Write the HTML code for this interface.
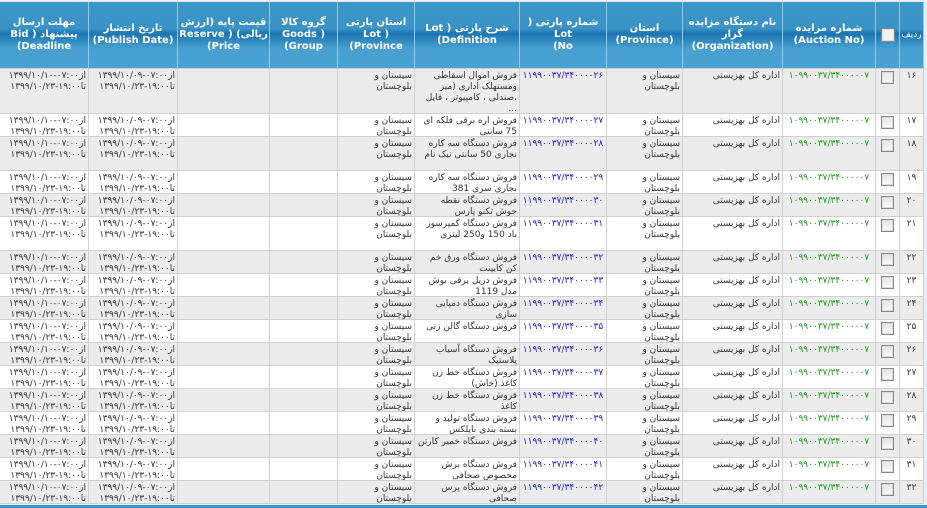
<!DOCTYPE html>
<html><head><meta charset="utf-8">
<style>
html,body{margin:0;padding:0;background:#fff;width:927px;height:508px;overflow:hidden;}
body{font-family:"DejaVu Sans","Liberation Sans",sans-serif;}
.wrap{position:absolute;left:0;top:0;width:927px;height:508px;background:#e8eef2;overflow:hidden;}
table{position:absolute;right:3px;top:2px;width:924px;border-collapse:collapse;table-layout:fixed;direction:rtl;font-size:9px;color:#333;}
th{height:66px;color:#fff;font-weight:bold;font-size:10px;line-height:12px;border-left:1px solid #8fcdf0;border-right:1px solid #8fcdf0;padding:0;
background:linear-gradient(to bottom,#3d96c8 0%,#3a93c6 40%,#1c76b2 48%,#2c86bd 56%,#469fd0 70%,#4aa2d2 100%);text-align:center;vertical-align:middle;overflow:hidden;}
th div{height:64px;display:flex;align-items:center;justify-content:center;overflow:hidden;}
td{border:1px solid #d0d0d0;vertical-align:top;padding:0 2px;text-align:right;}
td div{overflow:hidden;line-height:11px;padding-top:2px;box-sizing:border-box;}
tr.g td{background:#ececec;}
tr.w td{background:#fff;}
.cb{display:inline-block;width:11px;height:11px;border:1px solid #888;background:linear-gradient(#e4e4e4,#fafafa);box-shadow:inset 0 0 0 1px #ddd;}
th .cb{width:12px;height:12px;background:#f2f2f2;}
.c{text-align:center;}
.gr{color:#1a9a1a;text-align:center;}
.bl{color:#2020d0;text-align:center;}
.l{unicode-bidi:isolate;direction:ltr;}
.bot{position:absolute;left:0;top:505px;width:927px;height:3px;background:#3a93c6;}
</style></head><body><div class="wrap">
<table>
<colgroup><col style="width:24px"><col style="width:24px"><col style="width:93px"><col style="width:100px"><col style="width:76px"><col style="width:87px"><col style="width:105px"><col style="width:77px"><col style="width:68px"><col style="width:92px"><col style="width:89px"><col style="width:89px"></colgroup>
<tr><th><div style="font-size:9px;font-weight:normal">ردیف</div></th><th><div><span class="cb"></span></div></th><th><div>شماره مزایده<br>(Auction No)</div></th><th><div>نام دستگاه مزایده گزار<br>(Organization)</div></th><th><div>استان<br>(Province)</div></th><th><div>شماره پارتی ( Lot<br>No)</div></th><th><div>شرح پارتی ( Lot<br>Definition)</div></th><th><div>استان پارتی<br>( Lot<br>Province)</div></th><th><div>گروه کالا<br>( Goods<br>Group)</div></th><th><div>قیمت پایه (ارزش<br>ریالی) ( Reserve<br>Price)</div></th><th><div>تاریخ انتشار<br>(Publish Date)</div></th><th><div>مهلت ارسال<br>پیشنهاد ( Bid<br>Deadline)</div></th></tr>
<tbody id="b"></tbody>
</table>
<div class="bot"></div>
</div>
<script>
var defs=["فروش اموال اسقاطی ومستهلک اداری (میز ،صندلی ، کامپیوتر ، فایل ...","فروش اره برقی فلکه ای 75 سانتی","فروش دستگاه سه کاره نجاری 50 سانتی نیک نام","فروش دستگاه سه کاره نجاری سری 381","فروش دستگاه نقطه جوش تکنو پارس","فروش دستگاه کمپرسور باد 150 و250 لیتری","فروش دستگاه ورق خم کن کابینت","فروش دریل برقی بوش مدل 1119","فروش دستگاه دمپایی سازی","فروش دستگاه گالن زنی","فروش دستگاه آسیاب پلاستیک","فروش دستگاه خط زن کاغذ (خاش)","فروش دستگاه خط زن کاغذ","فروش دستگاه تولید و بسته بندی نایلکس","فروش دستگاه خمیر کارتن","فروش دستگاه برش مخصوص صحافی","فروش دستگاه پرس صحافی"];
var hs=[45,23,34,23,23,34,23,23,23,23,23,23,23,23,23,23,23];
var fa="۰۱۲۳۴۵۶۷۸۹";function p(n){return String(n).replace(/\d/g,function(d){return fa[d]})}
var h="";
for(var i=0;i<17;i++){var n=16+i;var cls=(i%2==0)?"g":"w";var H=hs[i]-1;
function d(x){return '<div style="height:'+H+'px">'+x+'</div>';}
var lot=p(26+i);
h+='<tr class="'+cls+'"><td class="c">'+d(p(n))+'</td><td class="c">'+d('<span class="cb"></span>')+'</td><td class="gr">'+d('<span class="l">۱۰۹۹۰۰۳۷/۳۴۰۰۰۰۰۷</span>')+'</td><td>'+d('اداره کل بهزیستی')+'</td><td>'+d('سیستان و بلوچستان')+'</td><td class="bl">'+d('<span class="l">۱۱۹۹۰۰۳۷/۳۴۰۰۰۰'+lot+'</span>')+'</td><td>'+d(defs[i])+'</td><td>'+d('سیستان و بلوچستان')+'</td><td>'+d('')+'</td><td>'+d('')+'</td><td>'+d('از<span class="l">۱۳۹۹/۱۰/۰۹-۰۷:۰۰</span><br>تا<span class="l">۱۳۹۹/۱۰/۲۳-۱۹:۰۰</span>')+'</td><td>'+d('از<span class="l">۱۳۹۹/۱۰/۱۰-۰۷:۰۰</span><br>تا<span class="l">۱۳۹۹/۱۰/۲۳-۱۹:۰۰</span>')+'</td></tr>';}
document.getElementById("b").innerHTML=h;
</script>
</body></html>
